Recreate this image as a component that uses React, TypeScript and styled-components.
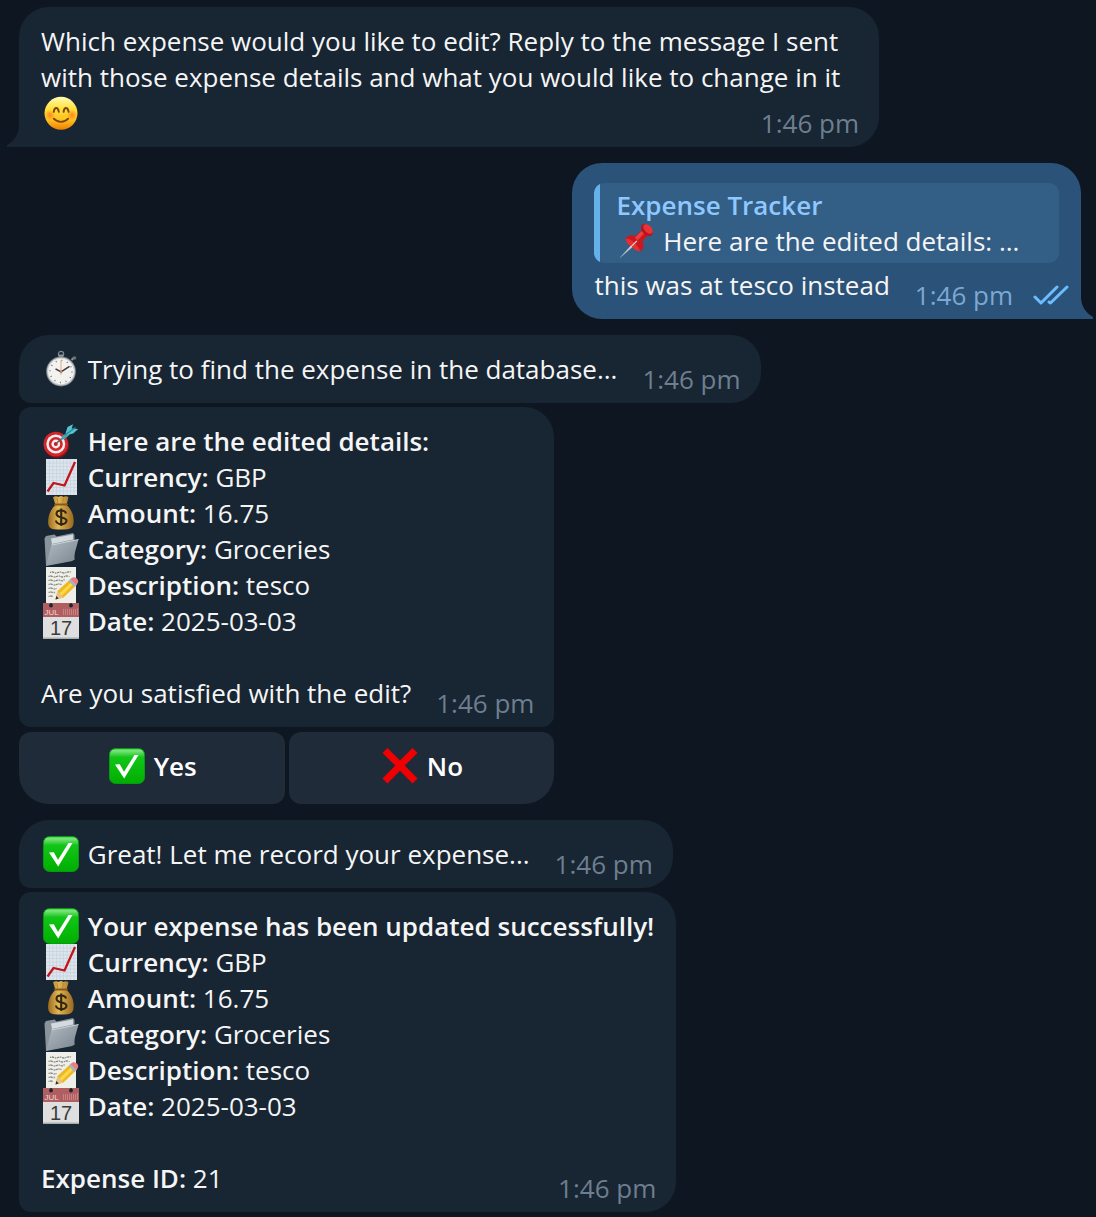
import React from "react";
import styled, { createGlobalStyle, css } from "styled-components";

const GlobalStyle = createGlobalStyle`
  body {
    margin: 0;
    background: #0e1621;
    color: #f5f5f5;
    font: 400 26px/36px "Open Sans", "Noto Sans", sans-serif;
  }
`;

const Chat = styled.main`
  display: flex;
  flex-direction: column;
  gap: 16px;
  padding: 7px 15px 5px 19px;
`;

const Group = styled.section<{ $own?: boolean }>`
  display: flex;
  flex-direction: column;
  gap: 4px;
  align-items: ${(p) => (p.$own ? "flex-end" : "flex-start")};
`;

const KeyboardMessage = styled.div`
  display: flex;
  flex-direction: column;
  gap: 5px;
`;

const bubbleBase = css<{ $radius: string }>`
  position: relative;
  box-sizing: border-box;
  max-width: 860px;
  border-radius: ${(p) => p.$radius};
`;

const Bubble = styled.article<{ $radius: string }>`
  ${bubbleBase}
  padding: 16px 22px;
  background: #182533;
`;

const OwnBubble = styled.article<{ $radius: string }>`
  ${bubbleBase}
  display: flex;
  flex-direction: column;
  gap: 4px;
  padding: 20px 0 16px;
  background: #2b5278;
`;

const Tail = styled.svg<{ $own?: boolean }>`
  position: absolute;
  bottom: 0;
  ${(p) => (p.$own ? "left: 100%;" : "right: 100%;")}
  fill: ${(p) => (p.$own ? "#2b5278" : "#182533")};
  transform: ${(p) => (p.$own ? "scaleX(-1)" : "none")};
`;

const Time = styled.time<{ $own?: boolean }>`
  float: right;
  margin: 10px -2px -10px 25px;
  color: ${(p) => (p.$own ? "#7da8d3" : "#6d7f8f")};
`;

const Strong = styled.strong`
  font-weight: 600;
`;

const Quote = styled.blockquote`
  margin: 0 22px;
  padding: 4px 16px 4px 22px;
  border-radius: 10px;
  background: linear-gradient(to right, #65b1ec 6px, #335f87 6px);
`;

const QuoteAuthor = styled.div`
  color: #8fc8ff;
  font-weight: 600;
`;

const OwnRow = styled.div`
  display: flex;
  padding: 0 12px 0 22px;
`;

const Ticks = styled.svg`
  margin: 17px 0 -5px 22px;
`;

const Keyboard = styled.div`
  display: grid;
  grid-template-columns: 1fr 1fr;
  gap: 4px;
`;

const KeyButton = styled.button<{ $radius: string }>`
  height: 72px;
  padding: 0 0 4px;
  border: 0;
  border-radius: ${(p) => p.$radius};
  background: #1f2b38;
  color: #ffffff;
  font: inherit;
  font-weight: 600;
  cursor: pointer;
`;

const Icon = styled.svg`
  width: 36px;
  height: 36px;
  margin: 0 2px;
  overflow: visible;
  vertical-align: top;
`;

const Smile = () => (
  <Icon viewBox="0 0 36 36" role="img" aria-label="Smiling face">
    <defs>
      <linearGradient id="sm" x1="0" y1="0" x2="0" y2="1">
        <stop offset="0" stopColor="#fffbb5" />
        <stop offset="0.35" stopColor="#ffe23c" />
        <stop offset="0.7" stopColor="#ffc021" />
        <stop offset="1" stopColor="#ee7d05" />
      </linearGradient>
      <radialGradient id="smc">
        <stop offset="0" stopColor="#ff6d1a" stopOpacity="0.75" />
        <stop offset="1" stopColor="#ff7a1a" stopOpacity="0" />
      </radialGradient>
    </defs>
    <circle cx="18" cy="18.300" r="16.500" fill="url(#sm)" />
    <circle cx="7" cy="20" r="5.500" fill="url(#smc)" />
    <circle cx="29" cy="20" r="5.500" fill="url(#smc)" />
    <g fill="none" stroke="#7d4509" strokeWidth="1.900" strokeLinecap="round">
      <path d="M10.800 16.800c.6-5 4.200-5 5 0" />
      <path d="M20.600 16.800c.6-5 4.200-5 5 0" />
      <path d="M10.800 23.700c4 4.200 10.400 4.200 14.400 0" />
    </g>
  </Icon>
);

const Pin = () => (
  <Icon viewBox="0 0 36 36" role="img" aria-label="Pushpin">
    <path d="M1.200 35.500 17 18.500l2 2Z" fill="#aab0b8" />
    <path d="M1.200 35.500 17 18.500l.8.800Z" fill="#e6e8ea" />
    <path d="M7.500 15.500c2-3.500 6.500-4 10-2.500l7-6.500 5.500 5.500-5.500 6.500c1.800 4 1.500 7.500-1.500 9.500-3.500.4-6.500-1.500-8.500-4-3.500-1.500-6.500-4.500-7-8.500Z" fill="#c9191f" />
    <path d="M7.500 15.500c4-.500 10 3.500 15 12.500-3.500.4-6.500-1.500-8.500-4-3.500-1.500-6-4.500-6.500-8.500Z" fill="#e62f31" />
    <path d="m17 14.500 6.500-6.500 2.500 2.500-6.500 7Z" fill="#ea3f3e" />
    <ellipse cx="29" cy="7" rx="7" ry="4.600" transform="rotate(45 29 7)" fill="#b91218" />
    <ellipse cx="30" cy="6" rx="5.800" ry="3.500" transform="rotate(45 30 6)" fill="#e83436" />
    <path d="m12 24 6.500-6.500.8.800-6.600 6.500Z" fill="#dde2e8" />
  </Icon>
);

const Stopwatch = () => (
  <Icon viewBox="0 0 36 36" role="img" aria-label="Stopwatch">
    <circle cx="18" cy="3" r="2.600" fill="none" stroke="#7d868c" strokeWidth="1.300" />
    <path d="M15.800 3.500h4.400v3.500h-4.400Z" fill="#8b9499" />
    <path d="m28.500 9 2.500-2.500" stroke="#8b9499" strokeWidth="2" />
    <circle cx="31.500" cy="7" r="1.800" fill="#687176" />
    <circle cx="18" cy="20.500" r="14.900" fill="#7b8286" />
    <circle cx="18" cy="20.500" r="14" fill="#c5c8c9" />
    <circle cx="18" cy="20.500" r="12.900" fill="#f2f2ef" />
    <circle cx="18" cy="20.500" r="11" fill="none" stroke="#777" strokeWidth="1.500" strokeDasharray="1 4.760" />
    <path d="M18 24V9" stroke="#e9b398" strokeWidth="1.200" />
    <path d="m12.500 17.800 5.500 3 8.500-5.500" fill="none" stroke="#353b3e" strokeWidth="1.500" />
    <circle cx="18" cy="20.700" r="1.300" fill="#c88262" />
  </Icon>
);

const Target = () => (
  <Icon viewBox="0 0 36 36" role="img" aria-label="Direct hit">
    <ellipse cx="13.500" cy="22.500" rx="12.500" ry="12.500" fill="#8d1115" />
    <circle cx="12.800" cy="21" r="12.300" fill="#d2262a" />
    <circle cx="12.800" cy="21" r="9.500" fill="#f6eeee" />
    <circle cx="12.800" cy="21" r="7" fill="#d2262a" />
    <circle cx="12.800" cy="21" r="4.400" fill="#f6eeee" />
    <circle cx="12.800" cy="21" r="2" fill="#c71b20" />
    <path d="m13 20.500 9-7.500" stroke="#54676e" strokeWidth="1.500" />
    <path d="m18 17 1-4 5.500-3.500 1.500 3-4.500 3.500Z" fill="#3fa5b5" />
    <path d="m22.500 10.500 2-6.500L30 1.200 28.700 5.500l6.500.500-5 4.500-5.500 1.500Z" fill="#55c3ce" />
    <path d="m22 12 10.500-7.500" stroke="#2b8797" strokeWidth="1.300" />
  </Icon>
);

const Chart = () => (
  <Icon viewBox="0 0 36 36" role="img" aria-label="Chart increasing">
    <path d="M3 0h31v36H3Z" fill="#dce5ec" />
    <path
      d="M6.500 0v36M10 0v36M13.500 0v36M17 0v36M20.500 0v36M24 0v36M27.500 0v36M31 0v36M3 4h31M3 7.500h31M3 11h31M3 14.500h31M3 18h31M3 21.500h31M3 25h31M3 28.500h31M3 32h31"
      stroke="#c3d1de"
      strokeWidth="0.700"
    />
    <path d="m4.500 32.500 6-8.500 11 2.500L32 3" fill="none" stroke="#c3131b" strokeWidth="2.300" />
  </Icon>
);

const MoneyBag = () => (
  <Icon viewBox="0 0 36 36" role="img" aria-label="Money bag">
    <defs>
      <linearGradient id="mb" x1="0" y1="0" x2="1" y2="0">
        <stop offset="0" stopColor="#9b6b20" />
        <stop offset="0.400" stopColor="#e3b656" />
        <stop offset="1" stopColor="#98681e" />
      </linearGradient>
    </defs>
    <path d="M12.500 10 10 2.200c2-1.500 4-1.200 5.500-.2 1.500-1.300 3.500-1.300 5 0 1.500-1 3.500-1 5 .2L23.500 10c5.500 4.500 8 12 7 18.500-.5 4-3 5.300-6 5.700-4 .5-9.500.5-13.500 0-3-.4-5.500-1.700-5.800-5.700C4.700 22 7 14.500 12.500 10Z" fill="url(#mb)" />
    <path d="M12 9.500h12" stroke="#865819" strokeWidth="2" strokeLinecap="round" />
    <path d="m14 3 .8 5M20.500 3l-.8 5" stroke="#b88632" strokeWidth="1" />
    <path d="M23 18.500c-1-4-9.500-4-9.500.3 0 5 10 2.400 10 7 0 4.500-10 4.400-10.500-.3M18.200 13.500v17.500" fill="none" stroke="#33270f" strokeWidth="2.100" />
  </Icon>
);

const Folder = () => (
  <Icon viewBox="0 0 36 36" role="img" aria-label="Open folder">
    <defs>
      <linearGradient id="fo" x1="0" y1="0" x2="1" y2="1">
        <stop offset="0" stopColor="#b3bcc4" />
        <stop offset="1" stopColor="#78838c" />
      </linearGradient>
    </defs>
    <path d="M1.500 7.500 3 5l8.500-1.500 2 2L30 2l1.500 2v25L3 34.500Z" fill="#88939c" />
    <path d="m8 7.500 22-4v5L9 13Z" fill="#d5dade" />
    <path d="m8.500 14 27-5.500-6 21.500L3 35Z" fill="url(#fo)" />
    <path d="m8.500 14 27-5.500" stroke="#d3d9dd" strokeWidth="0.900" />
  </Icon>
);

const Memo = () => (
  <Icon viewBox="0 0 36 36" role="img" aria-label="Memo">
    <path d="M3 0h30v36H3Z" fill="#efefea" />
    <path
      d="M7 5.500q2-1 4 0t4 0 4 0 4 0 5-.5M5.500 9.500q2-1 4 0t4 0 4 0 4 0 5 0M5.500 13.500q2-1 4 0t4 0 4 0 4-1M5.500 17.500q2-1 4 0t4 0 5 0M5.500 21.500q2-1 4 0t4 0M5.500 25.500q2-1 4 0h3M5.500 29.500q2-1 5 0"
      fill="none"
      stroke="#85847e"
      strokeWidth="1.300"
      strokeDasharray="1.200 .6 2.500 .8"
    />
    <path d="m12.500 32.500 2-8.500L27.500 12l6 6L20.500 30.500Z" fill="#f0b820" />
    <path d="m16.500 26.500 13-12.500 2 2L18.500 29Z" fill="#fbd94a" />
    <path d="m12.500 32.500 2-8.500 6 6.500Z" fill="#e7c18b" />
    <path d="m12.500 32.500.8-3.500 2.400 2.500Z" fill="#302d2b" />
    <path d="m25.500 14 2.500-2.500 6 6-2.500 2.500Z" fill="#a7b5bf" />
    <path d="m27.500 12 2-1.500c3-1 6.500 2 5.500 5l-1.500 2.500Z" fill="#ec7d80" />
  </Icon>
);

const MonthLabel = styled.text`
  font: 400 8px/1 "Liberation Sans", sans-serif;
  fill: #f0d8d8;
`;

const DayLabel = styled.text`
  font: 400 20px/1 "Liberation Sans", sans-serif;
  fill: #3b3b3b;
`;

const Calendar = () => (
  <Icon viewBox="0 0 36 36" role="img" aria-label="Calendar">
    <path d="M0 0h36v14H0Z" fill="#b15e61" />
    <path d="M0 14h36v22H0Z" fill="#dfdfdf" />
    <path d="M0 35.300h36" stroke="#a6afac" strokeWidth="1.400" />
    <circle cx="8" cy="2.500" r="1.900" fill="#192531" />
    <circle cx="28" cy="2.500" r="1.900" fill="#192531" />
    <path d="M8 0v2M28 0v2" stroke="#192531" strokeWidth="1.200" />
    <path d="M20.500 6v6M22.500 6v6M24.500 6v6M26.500 6v6M28.500 6v6M30.500 6v6M32.500 6v6M34.500 5v7" stroke="#c98788" strokeWidth="0.900" />
    <MonthLabel x="1.500" y="12">JUL</MonthLabel>
    <DayLabel x="18" y="31.500" textAnchor="middle">17</DayLabel>
  </Icon>
);

const Check = () => (
  <Icon viewBox="0 0 36 36" role="img" aria-label="Check mark">
    <defs>
      <linearGradient id="ck" x1="0" y1="0" x2="0" y2="1">
        <stop offset="0" stopColor="#35c83a" />
        <stop offset="0.060" stopColor="#7fe57f" />
        <stop offset="0.250" stopColor="#12c518" />
        <stop offset="1" stopColor="#00ae00" />
      </linearGradient>
    </defs>
    <rect x="0.500" y="0.500" width="35" height="35" rx="6" fill="url(#ck)" stroke="#079a14" />
    <path d="m6 16.500 4.800-.3 4.200 7.600L25.500 7h4L15.200 30.500Z" fill="#fff" />
  </Icon>
);

const Cross = () => (
  <Icon viewBox="0 0 36 36" role="img" aria-label="Cross mark">
    <path d="M5.500 0 18 12.600 30.500 0 35.500 5 22.700 17.600 35.500 30.500 30.500 35.500 18 22.700 5.500 35.500 .5 30.500 13.300 17.600 .5 5Z" fill="#f00000" />
  </Icon>
);

const BubbleTail = ({ own }: { own?: boolean }) => (
  <Tail $own={own} width="12" height="30" viewBox="0 0 12 30" aria-hidden="true">
    <path d="M12 0v30H0v-2C7 24 12 17 12 8Z" />
  </Tail>
);

const ExpenseDetails = () => (
  <>
    <Chart /> <Strong>Currency:</Strong> GBP
    <br />
    <MoneyBag /> <Strong>Amount:</Strong> 16.75
    <br />
    <Folder /> <Strong>Category:</Strong> Groceries
    <br />
    <Memo /> <Strong>Description:</Strong> tesco
    <br />
    <Calendar /> <Strong>Date:</Strong> 2025-03-03
    <br />
    <br />
  </>
);

export default function App() {
  return (
    <>
      <GlobalStyle />
      <Chat>
        <Group>
          <Bubble $radius="30px 30px 30px 0">
            Which expense would you like to edit? Reply to the message I sent with those expense
            details and what you would like to change in it <Smile />
            <Time>1:46 pm</Time>
            <BubbleTail />
          </Bubble>
        </Group>

        <Group $own>
          <OwnBubble $radius="30px 30px 0 30px">
            <Quote>
              <QuoteAuthor>Expense Tracker</QuoteAuthor>
              <Pin /> Here are the edited details: ...
            </Quote>
            <OwnRow>
              this was at tesco instead
              <Time $own>1:46 pm</Time>
              <Ticks width="36" height="24" viewBox="0 0 36 24" fill="none" stroke="#6cbdff" strokeWidth="3" strokeLinecap="round" strokeLinejoin="round" role="img" aria-label="Read">
                <path d="m2 13 6 6L24 3M16 18l1.500 1L34 3" />
              </Ticks>
            </OwnRow>
            <BubbleTail own />
          </OwnBubble>
        </Group>

        <Group>
          <Bubble $radius="30px 30px 30px 12px">
            <Stopwatch /> Trying to find the expense in the database...
            <Time>1:46 pm</Time>
          </Bubble>
          <KeyboardMessage>
            <Bubble $radius="12px 30px 12px 12px">
              <Target /> <Strong>Here are the edited details:</Strong>
              <br />
              <ExpenseDetails />
              Are you satisfied with the edit?
              <Time>1:46 pm</Time>
            </Bubble>
            <Keyboard>
              <KeyButton type="button" $radius="12px 12px 12px 30px">
                <Check /> Yes
              </KeyButton>
              <KeyButton type="button" $radius="12px 12px 30px 12px">
                <Cross /> No
              </KeyButton>
            </Keyboard>
          </KeyboardMessage>
        </Group>

        <Group>
          <Bubble $radius="30px 30px 30px 12px">
            <Check /> Great! Let me record your expense...
            <Time>1:46 pm</Time>
          </Bubble>
          <Bubble $radius="12px 30px 30px 12px">
            <Check /> <Strong>Your expense has been updated successfully!</Strong>
            <br />
            <ExpenseDetails />
            <Strong>Expense ID:</Strong> 21
            <Time>1:46 pm</Time>
          </Bubble>
        </Group>
      </Chat>
    </>
  );
}
